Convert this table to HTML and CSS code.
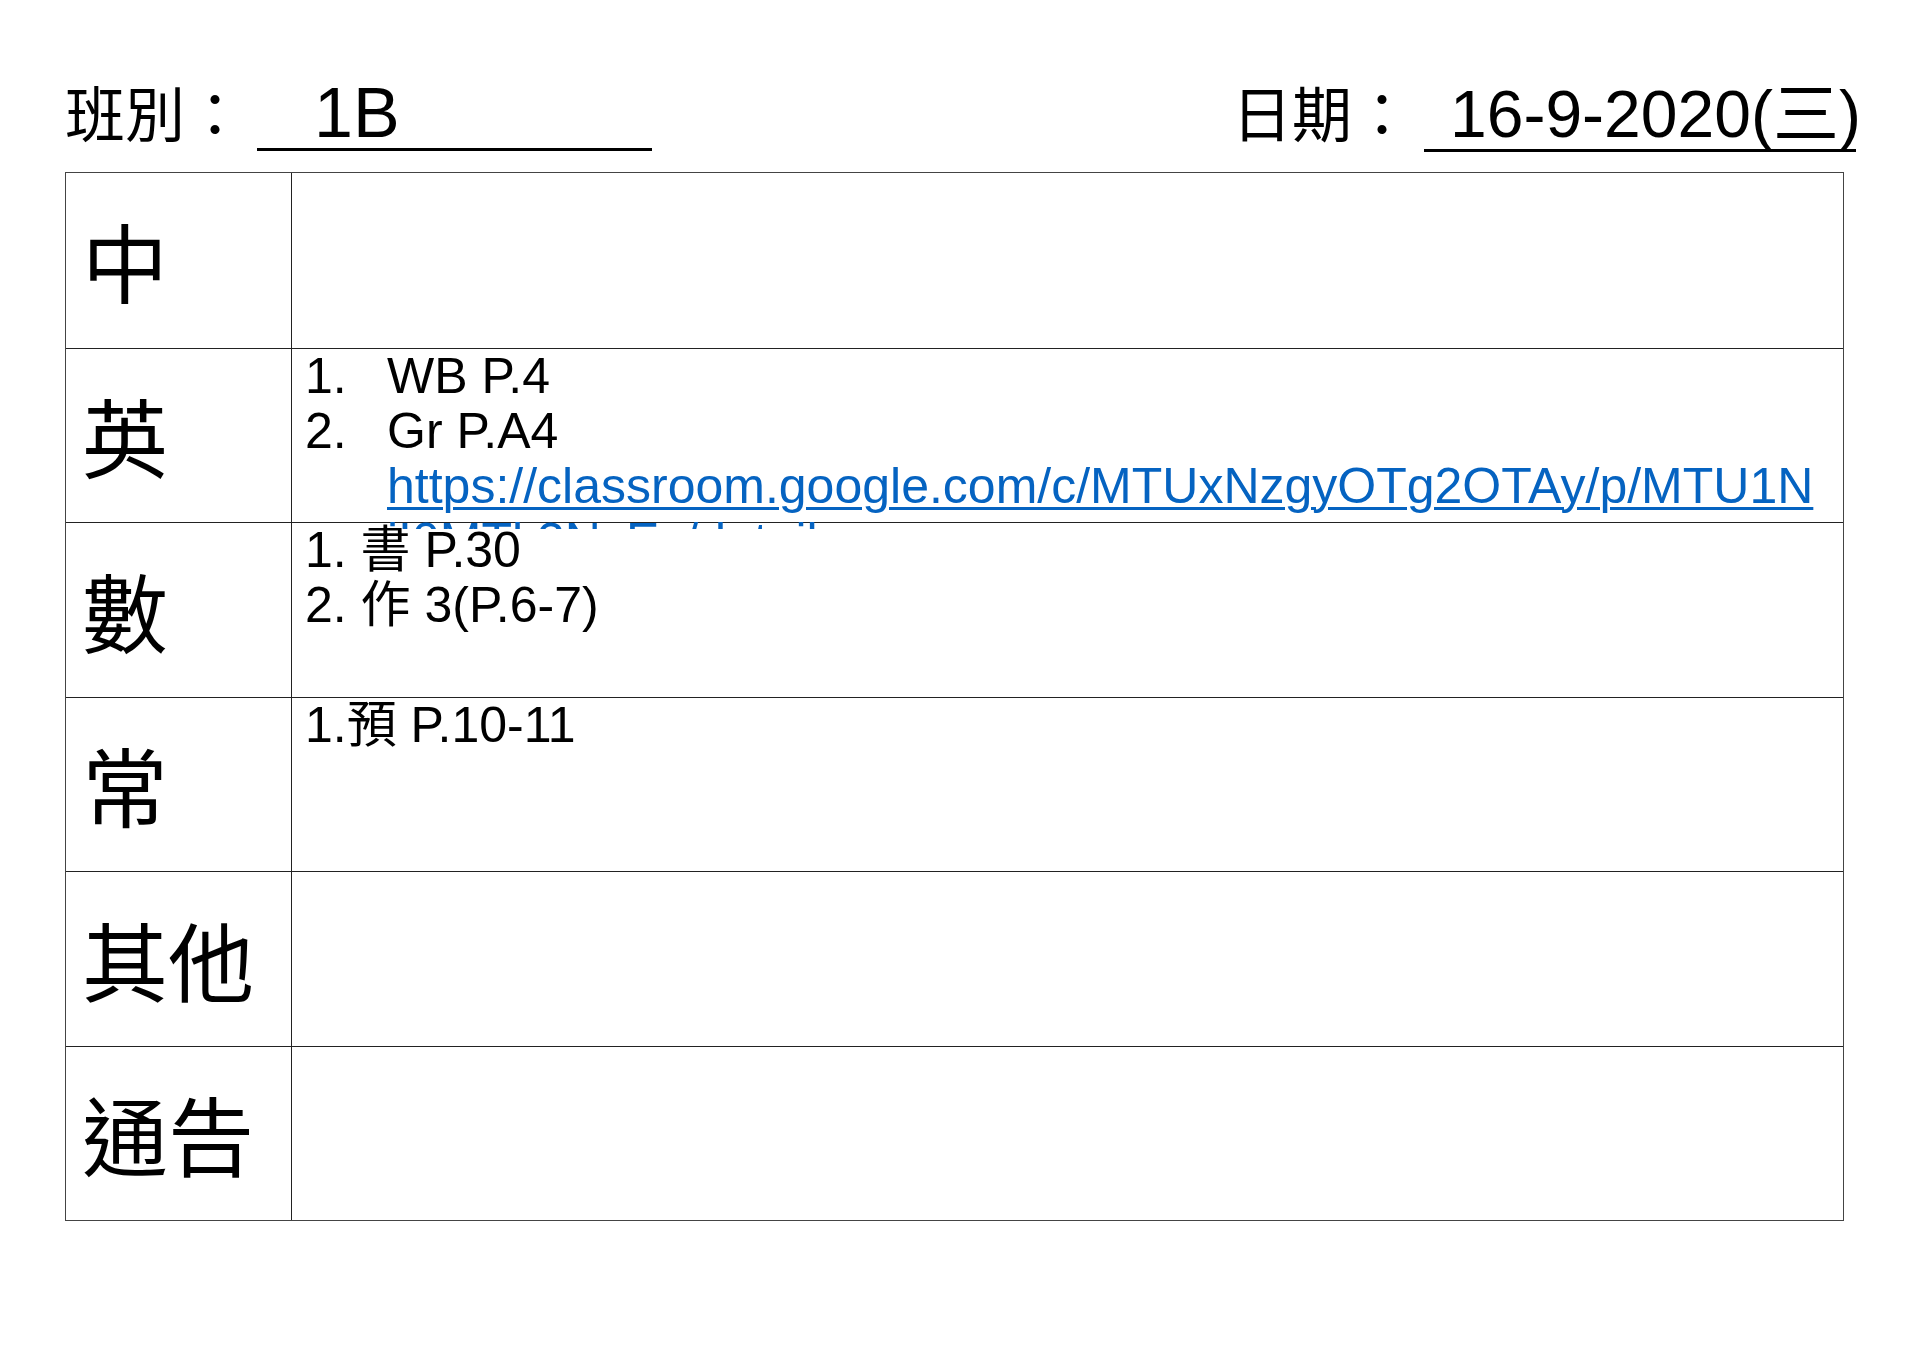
FILE: index.html
```html
<!DOCTYPE html>
<html lang="zh-Hant">
<head>
    <meta charset="UTF-8">
    <title>家課紀錄 1B</title>
    <link rel="stylesheet" href="styles.css">
</head>
<body>

<div class="page">
    <div class="header">
        <div class="field">
            <span class="field-label">班別：</span><span class="blank blank-class">1B</span>
        </div>
        <div class="field">
            <span class="field-label">日期：</span><span class="blank blank-date">16-9-2020(三)</span>
        </div>
    </div>

    <div class="sheet">
        <div class="row">
            <div class="subject">中</div>
            <div class="work"></div>
        </div>

        <!-- 英文：連結太長，第二行被下一格遮住 -->
        <div class="row">
            <div class="subject">英</div>
            <div class="work work-overflow">
                <div class="item"><span class="num">1.</span>WB P.4</div>
                <div class="item"><span class="num">2.</span>Gr P.A4</div>
                <div class="item-more">
                    <a class="link" href="https://classroom.google.com/c/MTUxNzgyOTg2OTAy/p/MTU1NjI0MTk2NzEy/details">https://classroom.google.com/c/MTUxNzgyOTg2OTAy/p/MTU1N<br>jI0MTk2NzEy/details</a>
                </div>
            </div>
        </div>

        <div class="row">
            <div class="subject">數</div>
            <div class="work">
                1. 書 P.30<br>
                2. 作 3(P.6-7)
            </div>
        </div>

        <div class="row">
            <div class="subject">常</div>
            <div class="work">1.預 P.10-11</div>
        </div>

        <div class="row">
            <div class="subject">其他</div>
            <div class="work"></div>
        </div>

        <div class="row">
            <div class="subject">通告</div>
            <div class="work"></div>
        </div>
    </div>
</div>

</body>
</html>
```

FILE: styles.css
```css
body {
    margin: 0;
    background: #fff;
    color: #000;
    font-family: "Liberation Sans", "Noto Sans CJK TC", sans-serif;
}
.page {
    width: 1791px;
    padding-left: 65px;
}

/* 頂部：班別、日期 */
.header {
    display: flex;
    justify-content: space-between;
    align-items: baseline;
    padding-top: 76px;
    font-size: 70px;
    line-height: 70px;
}
.field {
    white-space: nowrap;
}
.field-label {
    font-family: "Noto Sans CJK TC", sans-serif;
    font-size: 60px;
    margin-right: 12px;
}
.blank {
    display: inline-block;
    border-bottom: 3px solid #000;
    line-height: 70px;
    box-sizing: border-box;
}
.blank-class {
    width: 395px;
    padding-left: 57px;
}
.blank-date {
    width: 432px;
    padding-left: 26px;
    font-size: 66px;
}

/* 表格 */
.sheet {
    width: 1779px;
    box-sizing: border-box;
    margin-top: 20px;
    border: 1px solid #444;
}
.row {
    display: grid;
    grid-template-columns: 225px 1fr;
    grid-template-rows: minmax(0, 1fr);
    height: 174.5px;
    box-sizing: border-box;
}
.row + .row {
    border-top: 1px solid #222;
}
.subject {
    display: flex;
    align-items: center;
    padding-left: 16px;
    font-family: "Noto Sans CJK TC", sans-serif;
    font-size: 86px;
    line-height: 1;
}
.work {
    min-height: 0;
    border-left: 1px solid #222;
    padding: 0 8px 0 13px;
    font-size: 50px;
    line-height: 55px;
    overflow: hidden;
}
.work-overflow {
    overflow: visible;
    clip-path: inset(0 0 -7px 0);
}
.num {
    display: inline-block;
    width: 82px;
}
.item-more {
    padding-left: 82px;
}
.link {
    color: #0563c1;
    text-decoration: underline;
    text-decoration-thickness: 3px;
    text-underline-offset: 4px;
}
```
